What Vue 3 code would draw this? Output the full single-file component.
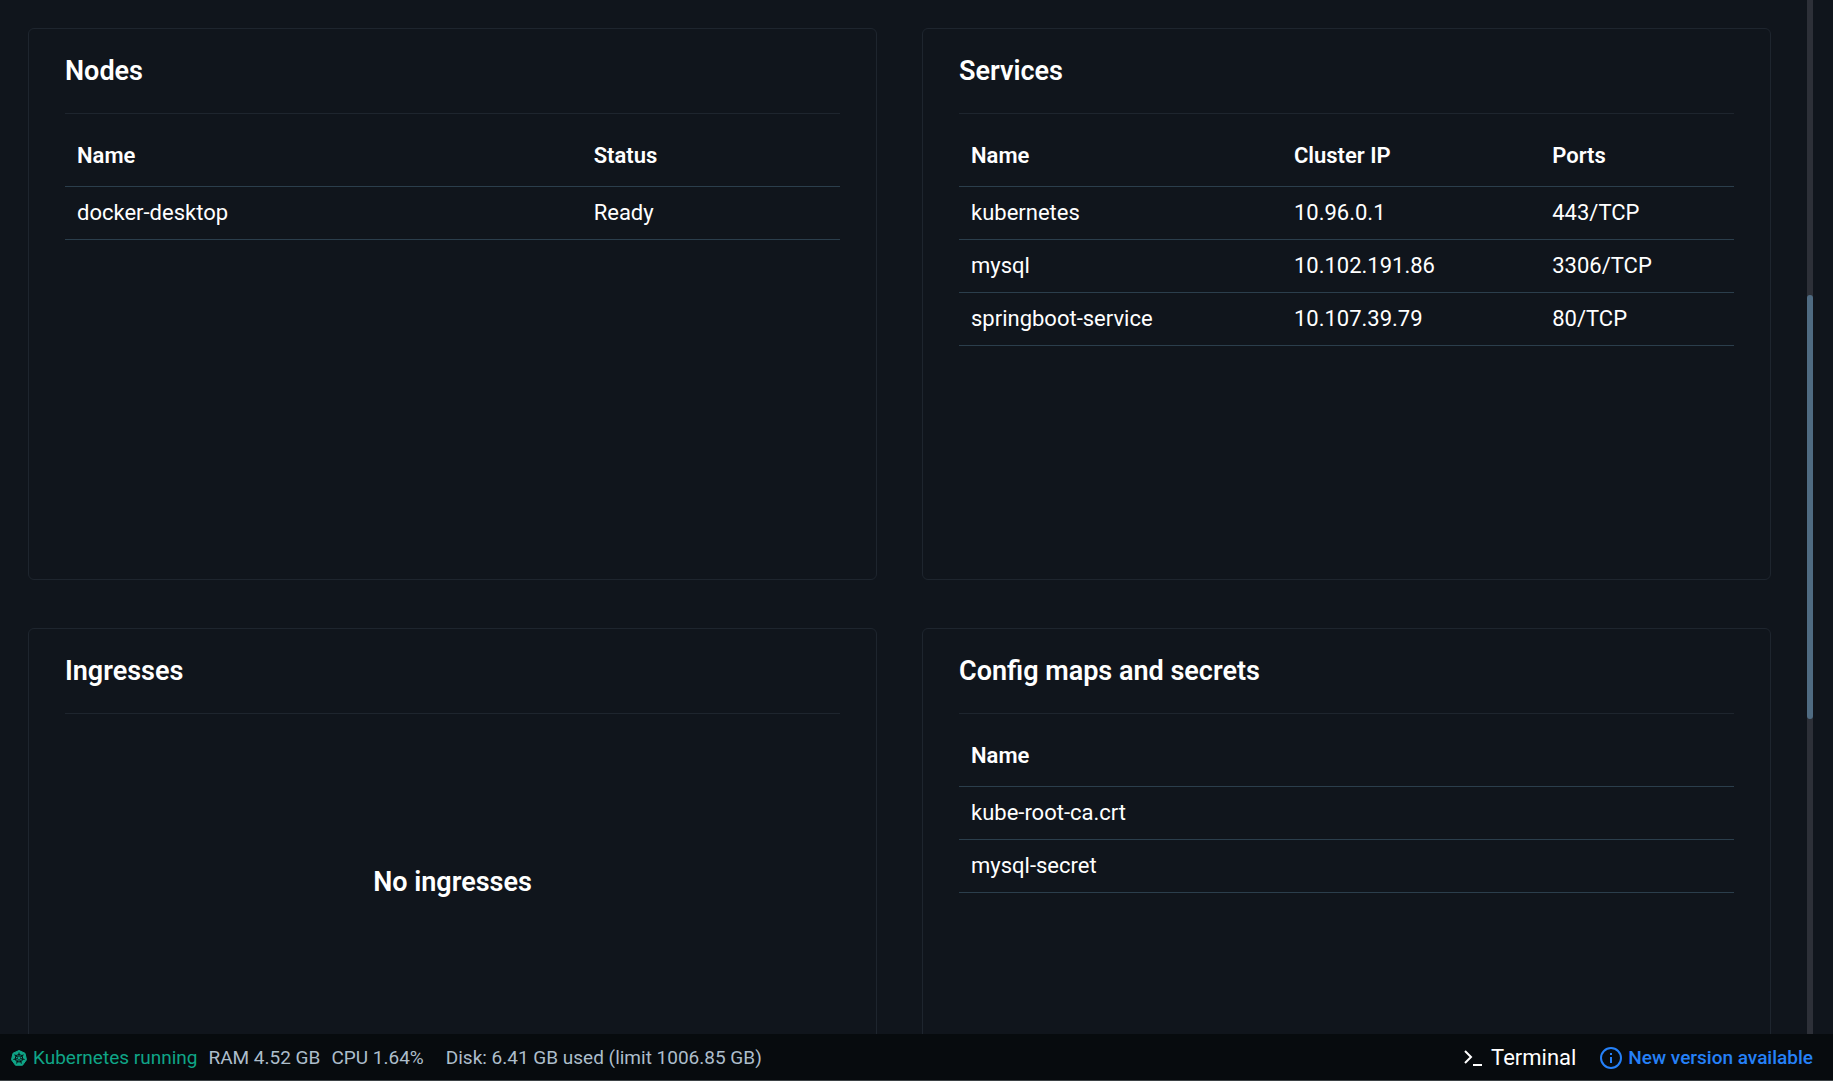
<script setup>
const cards = [
  {
    title: 'Nodes',
    columns: [{ label: 'Name', span: 8 }, { label: 'Status', span: 4 }],
    rows: [['docker-desktop', 'Ready']],
  },
  {
    title: 'Services',
    columns: [{ label: 'Name', span: 5 }, { label: 'Cluster IP', span: 4 }, { label: 'Ports', span: 3 }],
    rows: [
      ['kubernetes', '10.96.0.1', '443/TCP'],
      ['mysql', '10.102.191.86', '3306/TCP'],
      ['springboot-service', '10.107.39.79', '80/TCP'],
    ],
  },
  { title: 'Ingresses', empty: 'No ingresses' },
  {
    title: 'Config maps and secrets',
    columns: [{ label: 'Name', span: 12 }],
    rows: [['kube-root-ca.crt'], ['mysql-secret']],
  },
]
const spokes = [0, 1, 2, 3, 4, 5, 6].map((i) => (i * 360) / 7)
</script>

<template>
  <div class="app">
    <div class="viewport">
      <main class="cards">
        <section v-for="card in cards" :key="card.title" class="card">
          <h2 class="card-title">{{ card.title }}</h2>
          <table v-if="card.columns" class="grid">
            <colgroup>
              <col v-for="c in card.columns" :key="c.label" :style="{ width: (c.span / 12) * 100 + '%' }" />
            </colgroup>
            <thead>
              <tr>
                <th v-for="c in card.columns" :key="c.label" scope="col">{{ c.label }}</th>
              </tr>
            </thead>
            <tbody>
              <tr v-for="row in card.rows" :key="row[0]">
                <td v-for="cell in row" :key="cell">{{ cell }}</td>
              </tr>
            </tbody>
          </table>
          <p v-else class="empty">{{ card.empty }}</p>
        </section>
      </main>
      <div class="track"><div class="thumb"></div></div>
    </div>

    <footer class="status">
      <span class="kube">
        <svg width="16" height="16" viewBox="0 0 32 32" aria-hidden="true">
          <path
            d="M16 1 28 6.500 31 19.500 23 30.500H9L1 19.500 4 6.500Z"
            fill="#0fa587"
            stroke="#0fa587"
            stroke-width="2"
            stroke-linejoin="round"
          />
          <g stroke="#080c10" fill="none" stroke-width="2">
            <circle cx="16" cy="16.500" r="7.500" />
            <path v-for="a in spokes" :key="a" d="M16 14V5" :transform="`rotate(${a} 16 16.500)`" />
          </g>
        </svg>
        Kubernetes running
      </span>
      <span class="ram">RAM 4.52 GB</span>
      <span class="cpu">CPU 1.64%</span>
      <span>Disk: 6.41 GB used (limit 1006.85 GB)</span>
      <button type="button" class="terminal">
        <svg width="20" height="18" viewBox="0 0 20 18" aria-hidden="true">
          <path d="M2 2 8 8 2 14M10 16H19" fill="none" stroke="currentColor" stroke-width="2" />
        </svg>
        Terminal
      </button>
      <a href="#" class="update">
        <svg width="22" height="22" viewBox="0 0 22 22" aria-hidden="true">
          <circle cx="11" cy="11" r="10" fill="none" stroke="currentColor" stroke-width="2" />
          <path d="M11 10V16M11 6V8" fill="none" stroke="currentColor" stroke-width="2" />
        </svg>
        New version available
      </a>
    </footer>
  </div>
</template>

<style>
body {
  margin: 0;
  background: #10151c;
}
</style>

<style scoped>
.app {
  display: flex;
  flex-direction: column;
  height: 100vh;
  color: #fff;
  font-family: Roboto, sans-serif;
  background: #10151c;
}
.viewport {
  flex: 1;
  min-height: 0;
  display: flex;
  overflow: hidden;
  padding-right: 20px;
}
.cards {
  flex: 1;
  display: grid;
  grid-template-columns: 1fr 1fr;
  grid-auto-rows: 552px;
  gap: 48px 45px;
  padding: 28px 36px 28px 28px;
}
.card {
  box-sizing: border-box;
  padding: 0 36px;
  border: 1px solid #1e252e;
  border-radius: 6px;
}
.card-title {
  margin: 0;
  padding: 26px 0;
  border-bottom: 1px solid #1e252e;
  font-size: 27px;
  line-height: 32px;
  font-weight: 600;
}
.grid {
  width: 100%;
  table-layout: fixed;
  border-collapse: separate;
  border-spacing: 0;
  font-size: 22px;
  line-height: 28px;
}
.grid th,
.grid td {
  padding: 12px;
  border-bottom: 1px solid #2b3e4c;
  text-align: left;
}
.grid th {
  padding: 28px 12px 16px;
  font-weight: 600;
}
.grid td {
  font-weight: 400;
}
.empty {
  display: flex;
  align-items: center;
  justify-content: center;
  height: 336px;
  margin: 0;
  font-size: 27px;
  font-weight: 600;
}
.track {
  width: 6px;
  padding-top: 295px;
  background: #2d3038;
}
.thumb {
  height: 424px;
  border-radius: 3px;
  background: #4f6b82;
}
.status {
  box-sizing: border-box;
  display: flex;
  align-items: center;
  height: 47px;
  padding: 2px 20px 0 11px;
  border-bottom: 1px solid #3d4245;
  background: #070b0e;
  color: #adbecb;
  font-size: 19px;
  line-height: 24px;
  white-space: nowrap;
}
.kube {
  display: flex;
  align-items: center;
  gap: 6px;
  margin-right: 11px;
  color: #0fa587;
}
.ram {
  margin-right: 11px;
}
.cpu {
  margin-right: 22px;
}
.terminal {
  display: flex;
  align-items: center;
  gap: 8px;
  margin: 0 24px 0 auto;
  padding: 0;
  border: 0;
  background: none;
  color: #fff;
  font: 400 22px/24px Roboto, sans-serif;
}
.update {
  display: flex;
  align-items: center;
  gap: 6px;
  color: #2581f8;
  font-weight: 500;
  text-decoration: none;
}
</style>
